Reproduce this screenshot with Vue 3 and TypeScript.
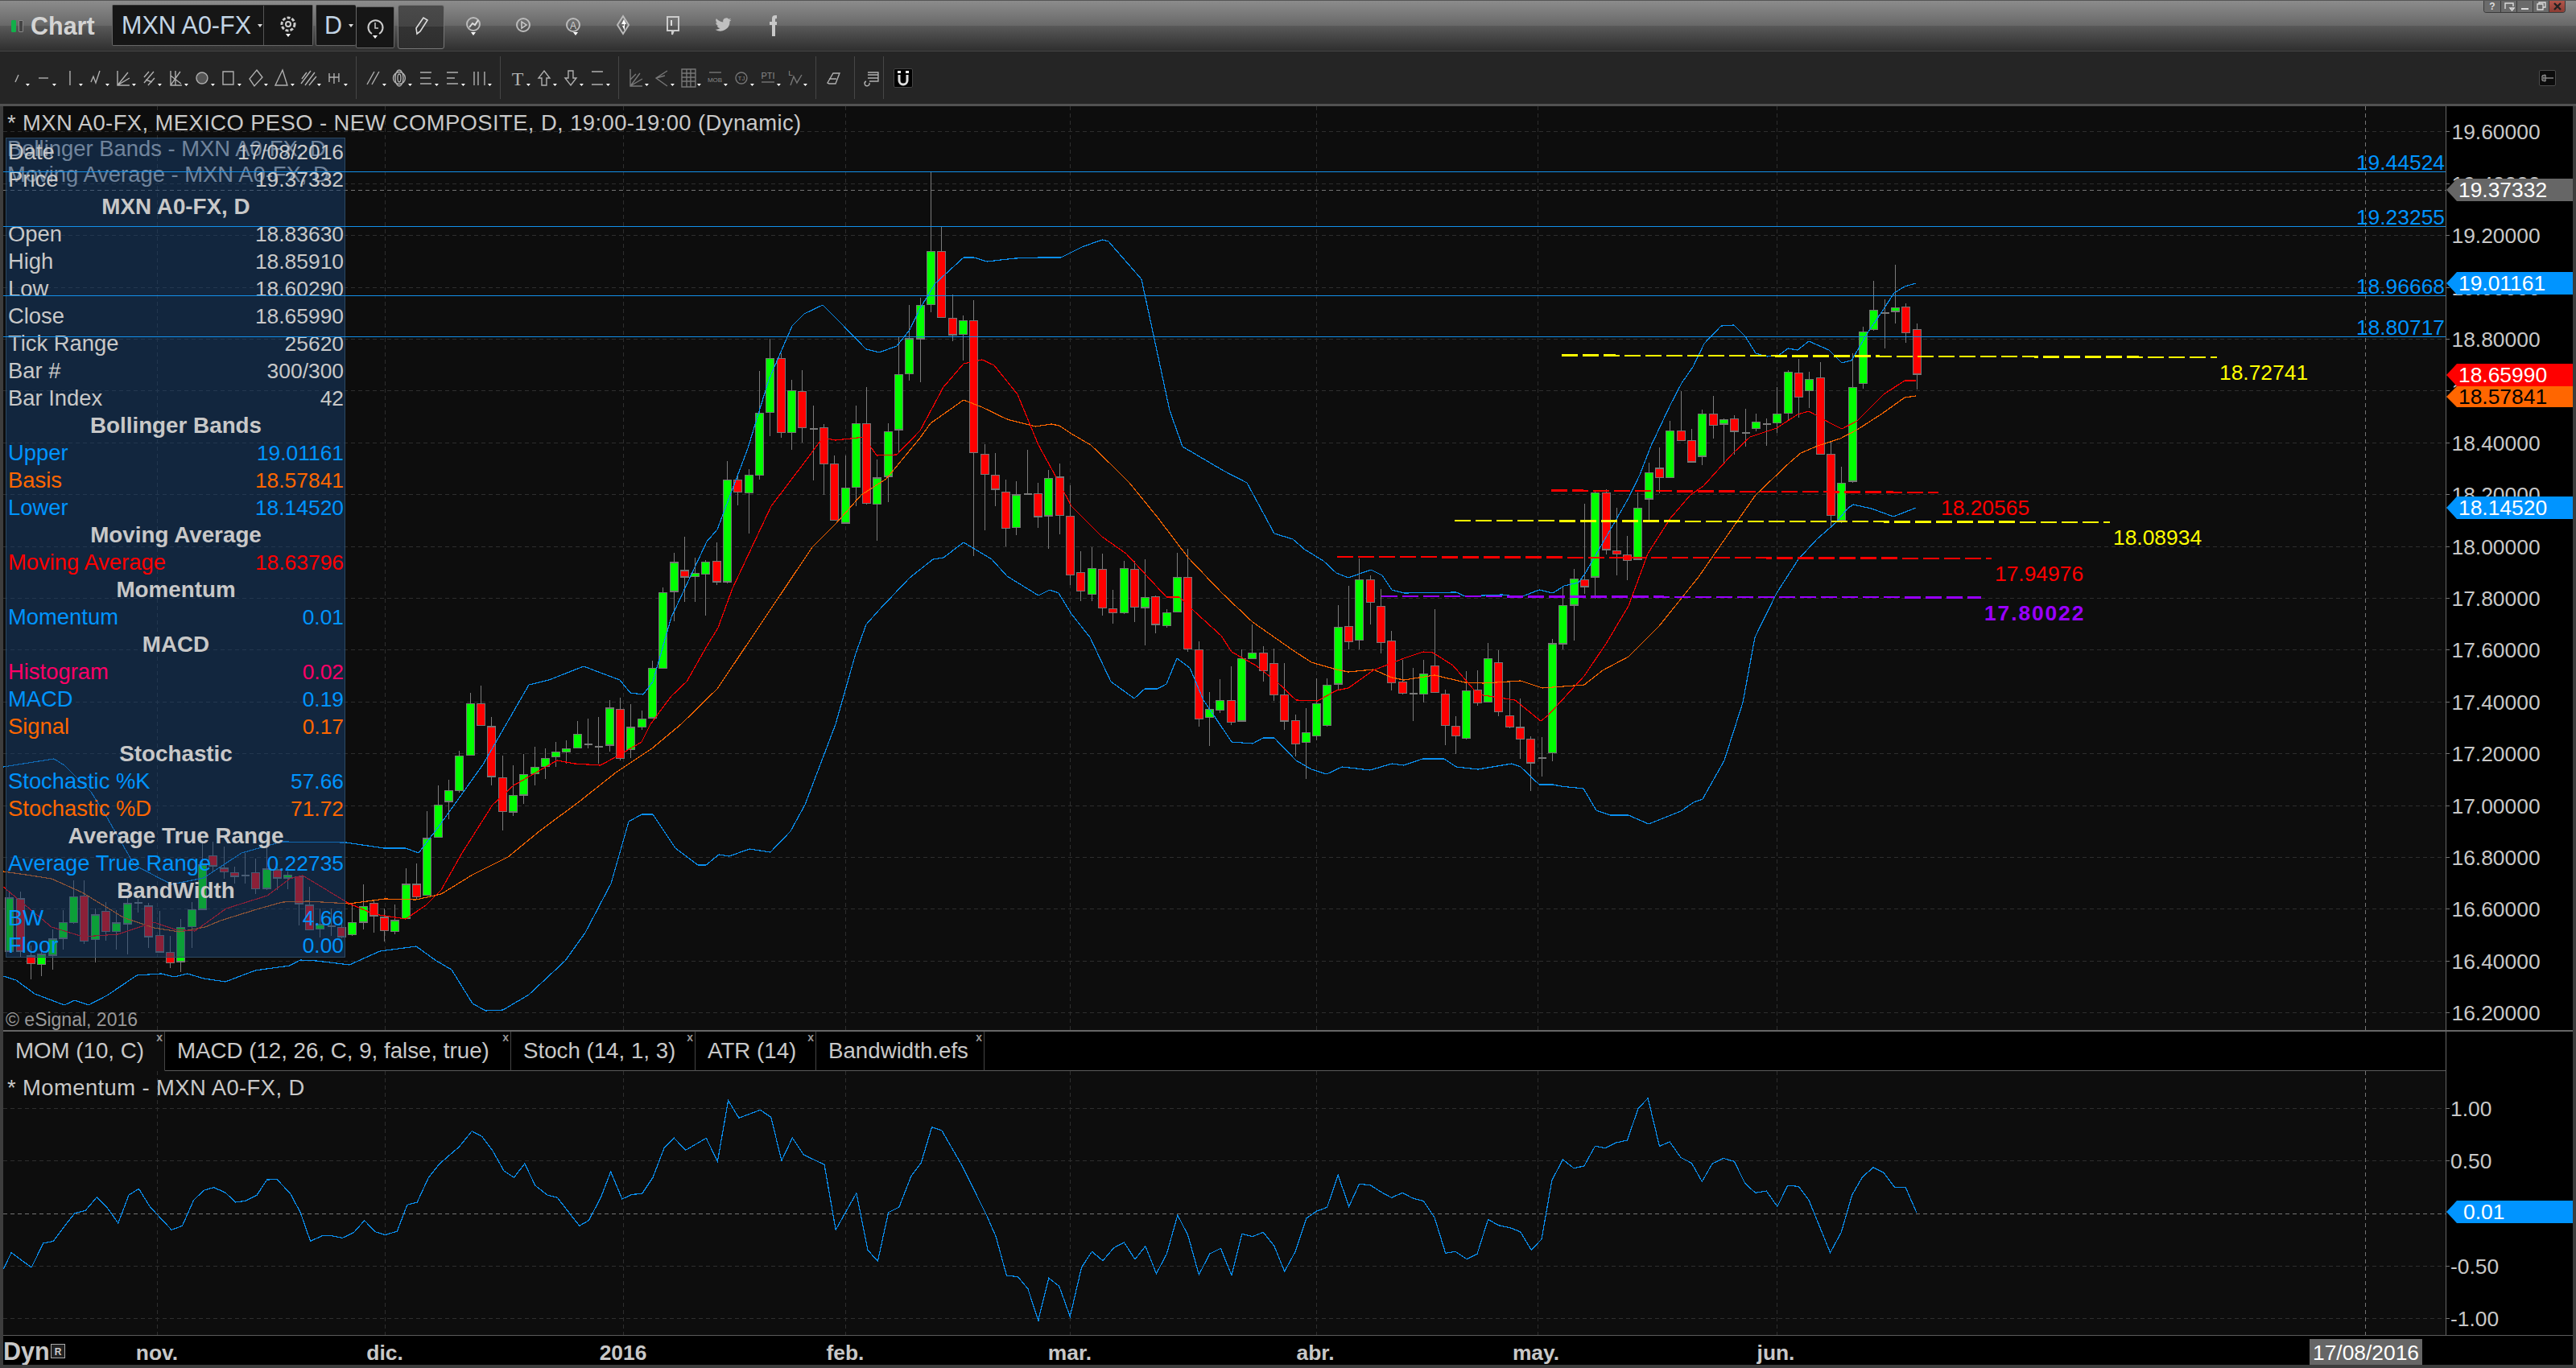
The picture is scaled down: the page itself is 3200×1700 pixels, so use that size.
<script setup lang="ts">
type Row = [number, number, number, number, string]
type Pt = [number, number]

// candle rows are read off the chart as top, bottom, wick top, wick bottom, colour
function readRows(y0: number, sy: number, rows: Row[]) {
  return rows.map(([t, b, wt, wb, c]) => ({
    top: y0 + t / sy,
    bot: y0 + b / sy,
    wickTop: y0 + wt / sy,
    wickBot: y0 + wb / sy,
    c,
  }))
}

const rawCandles = [
  ...readRows(300, 2.24, [
    [245, 370, 228, 412, 'r'], [182, 254, 172, 283, 'r'], [185, 195, 65, 228, 'g'], [199, 199, 162, 298, 'd'],
    [191, 245, 110, 248, 'g'], [252, 395, 238, 410, 'g'], [406, 668, 312, 673, 'g'], [673, 776, 628, 785, 'g'],
    [592, 763, 558, 792, 'r'], [380, 592, 337, 592, 'r'], [384, 415, 362, 464, 'g'], [366, 433, 326, 490, 'r'],
    [364, 478, 358, 500, 'g'], [480, 505, 405, 532, 'g'], [508, 508, 493, 570, 'd'], [503, 521, 480, 528, 'g'],
    [533, 533, 467, 572, 'd'], [494, 529, 484, 593, 'r'], [496, 509, 492, 618, 'g'], [480, 512, 430, 548, 'r'],
    [480, 598, 468, 622, 'g'], [554, 614, 522, 614, 'r'], [527, 554, 417, 527, 'r'], [527, 657, 500, 657, 'g'],
    [632, 657, 573, 700, 'r'], [644, 717, 617, 780, 'g'], [742, 885, 698, 885, 'g'], [872, 888, 820, 944, 'r'],
    [861, 870, 742, 930, 'r'], [700, 858, 690, 872, 'r'], [700, 934, 692, 994, 'g'], [942, 961, 730, 982, 'r'],
    [940, 1013, 912, 1110, 'g'], [1014, 1120, 962, 1136, 'g'], [1120, 1423, 1107, 1448, 'g'], [1437, 1437, 1380, 1490, 'd'],
    [1385, 1452, 1378, 1530, 'r'],
  ]),
  ...readRows(600, 3, [
    [912, 955, 805, 1030, 'r'], [868, 910, 738, 915, 'r'], [670, 853, 625, 870, 'r'], [655, 818, 597, 820, 'g'],
    [772, 820, 700, 830, 'r'], [775, 952, 702, 958, 'g'], [907, 943, 870, 1010, 'r'], [787, 905, 770, 978, 'r'],
    [682, 782, 470, 782, 'r'], [712, 788, 660, 820, 'g'], [786, 786, 690, 888, 'd'], [742, 785, 660, 790, 'r'],
    [590, 745, 552, 775, 'r'], [460, 595, 395, 635, 'r'], [361, 445, 345, 528, 'r'], [361, 586, 282, 620, 'g'],
    [536, 593, 385, 620, 'r'], [538, 750, 455, 770, 'g'], [754, 905, 730, 910, 'g'], [823, 943, 730, 960, 'g'],
    [931, 967, 840, 1103, 'g'], [886, 973, 865, 1020, 'r'], [790, 888, 672, 920, 'r'], [674, 790, 618, 812, 'r'],
    [634, 700, 610, 740, 'r'], [634, 655, 528, 655, 'g'], [655, 888, 620, 890, 'g'], [812, 892, 685, 902, 'r'],
    [812, 847, 732, 858, 'g'], [845, 874, 780, 980, 'g'], [622, 880, 592, 908, 'r'], [352, 620, 245, 630, 'r'],
    [352, 482, 260, 483, 'g'], [484, 532, 470, 540, 'g'], [424, 528, 420, 562, 'r'], [428, 465, 285, 605, 'g'],
    [322, 463, 290, 520, 'r'], [320, 484, 290, 490, 'g'], [470, 484, 400, 525, 'r'], [322, 466, 265, 495, 'r'],
    [320, 415, 240, 440, 'g'], [334, 403, 255, 440, 'r'], [124, 343, 10, 380, 'r'],
  ]),
  ...readRows(200, 2.24, [
    [880, 987, 842, 1040, 'r'], [884, 988, 860, 1080, 'g'], [926, 990, 895, 1022, 'r'], [927, 927, 805, 930, 'd'],
    [930, 1020, 892, 1042, 'g'], [922, 1022, 888, 1072, 'r'], [875, 914, 812, 960, 'r'], [817, 872, 788, 1028, 'r'],
    [445, 812, 388, 1100, 'r'], [445, 483, 430, 555, 'g'], [438, 484, 372, 502, 'r'], [252, 436, 183, 436, 'r'],
    [252, 400, 30, 422, 'g'], [402, 495, 380, 615, 'g'], [495, 592, 400, 612, 'g'], [595, 748, 490, 810, 'g'],
    [754, 878, 730, 950, 'g'], [882, 955, 830, 1058, 'g'], [731, 953, 630, 957, 'r'], [731, 908, 680, 960, 'g'],
    [910, 1008, 820, 1010, 'g'], [843, 1000, 820, 1002, 'r'], [742, 843, 732, 930, 'r'], [746, 746, 680, 890, 'd'],
    [642, 743, 582, 785, 'r'], [640, 756, 610, 805, 'g'], [550, 756, 535, 770, 'r'], [550, 700, 495, 765, 'g'],
    [702, 875, 585, 888, 'g'], [875, 924, 858, 1038, 'g'], [888, 922, 875, 958, 'r'], [888, 1172, 836, 1175, 'g'],
    [1114, 1172, 1062, 1180, 'r'], [1117, 1150, 1110, 1265, 'g'], [1148, 1157, 1105, 1228, 'g'], [1140, 1158, 1045, 1228, 'r'],
    [1118, 1198, 1090, 1282, 'g'], [1202, 1412, 1188, 1412, 'g'], [1412, 1550, 1390, 1552, 'g'],
  ]),
  ...readRows(700, 2.613, [
    [505, 532, 478, 540, 'g'], [533, 605, 458, 632, 'g'], [474, 634, 437, 640, 'r'], [470, 590, 445, 612, 'g'],
    [595, 595, 500, 650, 'd'], [587, 587, 505, 600, 'd'], [555, 600, 512, 600, 'g'], [602, 613, 575, 650, 'g'],
    [613, 628, 580, 660, 'g'], [633, 660, 600, 700, 'g'], [662, 683, 595, 720, 'g'], [686, 752, 620, 782, 'g'],
    [754, 808, 655, 820, 'g'], [696, 806, 625, 868, 'r'], [530, 692, 500, 720, 'r'], [456, 526, 396, 528, 'r'],
    [456, 623, 420, 625, 'g'], [626, 738, 610, 745, 'g'], [738, 773, 702, 830, 'g'], [785, 890, 720, 890, 'g'],
    [893, 1078, 805, 1078, 'g'], [1042, 1083, 975, 1090, 'r'], [1042, 1153, 990, 1155, 'g'], [1160, 1195, 1108, 1205, 'g'],
    [1150, 1193, 1120, 1228, 'r'], [1104, 1145, 1095, 1200, 'r'], [1114, 1165, 1042, 1190, 'g'], [1167, 1206, 1105, 1210, 'g'],
    [1183, 1212, 1130, 1218, 'r'], [1178, 1178, 1120, 1210, 'd'], [1173, 1187, 1120, 1215, 'g'], [1110, 1190, 1050, 1190, 'r'],
    [1018, 1105, 1015, 1175, 'r'], [1012, 1022, 1000, 1058, 'g'], [995, 1022, 985, 1060, 'r'], [993, 1056, 920, 1060, 'g'],
    [1005, 1057, 960, 1075, 'r'], [1013, 1013, 940, 1040, 'd'], [1005, 1017, 985, 1040, 'r'], [990, 1002, 920, 1025, 'r'],
    [950, 983, 905, 1000, 'r'], [980, 1123, 905, 1125, 'g'], [1125, 1180, 1100, 1250, 'g'], [1183, 1293, 1155, 1327, 'g'],
    [1263, 1297, 1210, 1315, 'r'], [1208, 1262, 1130, 1262, 'r'], [1113, 1212, 1103, 1250, 'r'], [1103, 1103, 1090, 1135, 'd'],
    [1105, 1170, 1085, 1270, 'g'], [1168, 1195, 1125, 1255, 'g'], [1130, 1195, 1100, 1225, 'r'], [1142, 1222, 1120, 1295, 'g'],
    [1080, 1227, 1030, 1235, 'r'], [1083, 1167, 1030, 1170, 'g'], [1167, 1218, 1125, 1255, 'g'], [1220, 1273, 1190, 1320, 'g'],
    [1270, 1302, 1245, 1340, 'g'], [1275, 1300, 1240, 1350, 'r'], [1090, 1260, 1065, 1280, 'r'], [1087, 1260, 1065, 1262, 'g'],
  ]),
]

const BAR_STEP = 13.31
const candles = rawCandles.map((c, k) => ({ ...c, x: Math.round(2380.5 - BAR_STEP * k) + 0.5 }))

const upperBand: Pt[] = [
  [4, 953], [67, 943], [80, 951], [113, 984], [133, 1016], [167, 1075], [213, 1099], [253, 1091], [300, 1060], [350, 1046],
  [430, 1047], [477, 1054], [504, 1054], [520, 1060], [548, 1023], [600, 950], [657, 851], [682, 845], [725, 828], [746, 836],
  [770, 845], [783, 861], [799, 863], [811, 847], [834, 767], [878, 673], [891, 658], [929, 557], [955, 472], [984, 405],
  [999, 390], [1022, 379], [1044, 401], [1076, 434], [1092, 438], [1114, 430], [1130, 410], [1143, 383], [1162, 352], [1197, 320],
  [1210, 320], [1226, 325], [1261, 321], [1293, 320], [1318, 320], [1344, 307], [1369, 298], [1377, 300], [1418, 347], [1453, 510],
  [1469, 555], [1520, 585], [1549, 600], [1583, 663], [1606, 670], [1621, 683], [1644, 697], [1660, 712], [1675, 718], [1703, 708],
  [1717, 715], [1729, 733], [1744, 737], [1809, 736], [1820, 741], [1866, 739], [1889, 742], [1912, 733], [1929, 737], [1943, 728],
  [1961, 724], [1970, 711], [2023, 619], [2037, 590], [2051, 554], [2075, 503], [2089, 476], [2103, 456], [2117, 427], [2138, 405],
  [2154, 404], [2168, 418], [2181, 439], [2195, 443], [2209, 442], [2221, 433], [2233, 435], [2247, 424], [2272, 435], [2288, 451],
  [2300, 448], [2321, 412], [2340, 384], [2353, 364], [2366, 356], [2380, 352],
]

const lowerBand: Pt[] = [
  [4, 1213], [20, 1218], [43, 1235], [80, 1249], [93, 1243], [110, 1249], [133, 1237], [170, 1212], [200, 1210], [217, 1214],
  [233, 1210], [253, 1216], [280, 1220], [317, 1206], [360, 1200], [373, 1193], [393, 1194], [434, 1199], [472, 1182], [517, 1176],
  [542, 1194], [561, 1205], [587, 1247], [603, 1256], [625, 1255], [657, 1236], [702, 1194], [727, 1159], [759, 1098], [781, 1021],
  [797, 1012], [811, 1012], [839, 1054], [867, 1075], [877, 1075], [893, 1062], [906, 1064], [931, 1055], [957, 1059], [982, 1033],
  [1000, 1000], [1038, 900], [1063, 812], [1076, 776], [1092, 758], [1130, 718], [1159, 695], [1172, 693], [1197, 674], [1232, 695],
  [1251, 716], [1290, 740], [1304, 733], [1315, 737], [1331, 763], [1354, 792], [1380, 847], [1409, 868], [1422, 856], [1438, 856],
  [1449, 850], [1462, 818], [1478, 830], [1495, 870], [1530, 922], [1556, 924], [1569, 917], [1583, 917], [1610, 945], [1629, 956],
  [1648, 962], [1667, 953], [1702, 957], [1729, 949], [1744, 951], [1767, 943], [1794, 943], [1809, 953], [1836, 956], [1878, 949],
  [1889, 953], [1912, 975], [1929, 975], [1939, 977], [1967, 980], [1983, 1007], [2000, 1013], [2023, 1013], [2048, 1024], [2088, 1008],
  [2104, 997], [2115, 993], [2142, 945], [2165, 873], [2180, 792], [2207, 737], [2234, 695], [2257, 670], [2280, 650], [2295, 632],
  [2302, 627], [2325, 632], [2352, 642], [2380, 631],
]

const redMa: Pt[] = [
  [4, 1102], [64, 1152], [103, 1164], [147, 1161], [191, 1146], [217, 1155], [242, 1157], [281, 1129], [332, 1113], [360, 1092],
  [376, 1088], [434, 1123], [465, 1136], [504, 1142], [529, 1125], [548, 1106], [574, 1060], [612, 1000], [638, 976], [692, 945],
  [714, 949], [746, 951], [775, 935], [797, 922], [808, 900], [834, 865], [853, 847], [878, 803], [892, 780], [910, 731],
  [958, 629], [999, 575], [1022, 544], [1038, 547], [1057, 545], [1073, 543], [1089, 566], [1114, 565], [1143, 535], [1172, 481],
  [1197, 452], [1220, 447], [1235, 454], [1264, 490], [1290, 553], [1312, 593], [1331, 629], [1369, 667], [1399, 688], [1449, 742],
  [1465, 742], [1484, 760], [1517, 790], [1530, 810], [1560, 827], [1587, 848], [1610, 870], [1637, 871], [1660, 858], [1675, 855],
  [1706, 833], [1744, 818], [1768, 810], [1780, 811], [1805, 827], [1836, 863], [1882, 870], [1914, 896], [1923, 889], [1968, 840],
  [1995, 800], [2023, 753], [2047, 688], [2075, 644], [2100, 615], [2116, 604], [2153, 563], [2174, 543], [2207, 532], [2233, 515],
  [2247, 511], [2272, 525], [2288, 533], [2307, 523], [2340, 490], [2366, 473], [2380, 473],
]

const orangeBasis: Pt[] = [
  [4, 1083], [32, 1087], [64, 1092], [102, 1109], [153, 1140], [191, 1153], [223, 1158], [255, 1152], [274, 1144], [319, 1130],
  [351, 1121], [383, 1120], [434, 1123], [478, 1117], [517, 1118], [548, 1111], [587, 1087], [631, 1065], [670, 1033], [721, 995],
  [765, 960], [810, 930], [846, 900], [891, 856], [942, 780], [1009, 680], [1038, 651], [1070, 615], [1101, 595], [1143, 544],
  [1156, 526], [1197, 497], [1220, 506], [1251, 521], [1286, 530], [1306, 527], [1316, 529], [1331, 539], [1355, 553], [1382, 579],
  [1403, 600], [1438, 643], [1476, 693], [1518, 737], [1556, 773], [1606, 808], [1629, 823], [1660, 832], [1675, 835], [1706, 832],
  [1729, 842], [1744, 845], [1782, 839], [1820, 848], [1843, 849], [1889, 846], [1916, 855], [1968, 851], [1991, 833], [2023, 816],
  [2061, 778], [2110, 717], [2153, 655], [2181, 615], [2223, 575], [2237, 563], [2258, 554], [2286, 545], [2307, 534], [2338, 514],
  [2366, 494], [2380, 492],
]

const momentumPts: Pt[] = [
  ...([
    [5, 1012], [17, 950], [47, 1005], [65, 915], [80, 907], [97, 850], [112, 803], [128, 793], [145, 743], [160, 780], [177, 840],
    [193, 735], [208, 712], [225, 780], [257, 865], [273, 850], [290, 755], [305, 718], [320, 707], [337, 725], [353, 762], [368, 757],
    [385, 735], [400, 678], [415, 677], [435, 730], [450, 800], [465, 907], [483, 887], [497, 887], [513, 895], [530, 875], [546, 830],
    [562, 872], [577, 884], [595, 870], [610, 772], [625, 762], [642, 670], [658, 620], [688, 555], [707, 497], [722, 517], [738, 570],
    [755, 645], [770, 670], [786, 618], [802, 700], [820, 735], [835, 745], [868, 850], [882, 830], [900, 745], [915, 648], [932, 750],
    [947, 733], [962, 730], [978, 670], [995, 560], [1010, 523], [1027, 568], [1058, 523], [1075, 610], [1091, 382], [1107, 448], [1139, 418],
    [1155, 445], [1171, 607], [1187, 522], [1204, 585], [1235, 622], [1252, 865], [1283, 728], [1300, 940], [1315, 982], [1331, 800],
    [1347, 780], [1365, 665], [1380, 615], [1396, 482], [1411, 495], [1440, 620], [1478, 810], [1492, 890], [1508, 1035], [1525, 1040],
    [1540, 1085], [1556, 1207],
  ] as Pt[]).map(([x, y]): Pt => [x / 1.206, 1240 + y / 3]),
  ...([
    [0, 900], [18, 745], [36, 775], [55, 888], [75, 705], [93, 646], [112, 680], [131, 632], [149, 612], [168, 675], [186, 626],
    [205, 728], [223, 655], [242, 510], [260, 585], [279, 732], [298, 654], [317, 634], [336, 735], [354, 580], [372, 590], [391, 574],
    [410, 625], [428, 720], [447, 645], [466, 522], [484, 495], [502, 481], [521, 360], [540, 478], [558, 394], [577, 398], [596, 424],
    [614, 445], [633, 427], [651, 447], [670, 458], [689, 520], [708, 652], [725, 646], [745, 674], [763, 655], [782, 526], [800, 548],
    [820, 557], [838, 572], [857, 640], [875, 600], [893, 380], [912, 303], [931, 335], [949, 327], [968, 253], [986, 260], [1005, 240],
    [1024, 231], [1043, 113], [1060, 74], [1080, 253], [1098, 237], [1117, 295], [1136, 316], [1154, 385], [1172, 318], [1191, 298], [1210, 310],
    [1229, 392], [1247, 427], [1266, 420], [1285, 478], [1303, 400], [1322, 403], [1340, 455], [1377, 650], [1396, 575], [1415, 435], [1433, 368],
    [1452, 332], [1470, 352], [1489, 406], [1508, 406], [1527, 500],
  ] as Pt[]).map(([x, y]): Pt => [1290 + x / 1.4, 1340 + y / 3]),
]

const toPoints = (pts: Pt[]) => pts.map(([x, y]) => `${x},${y}`).join(' ')

const bands = [
  { pts: toPoints(upperBand), color: '#0a8ff0' },
  { pts: toPoints(lowerBand), color: '#0a8ff0' },
  { pts: toPoints(orangeBasis), color: '#ff6600' },
  { pts: toPoints(redMa), color: '#ff0000' },
]
const momentumLine = toPoints(momentumPts)

const priceY = (v: number) => 163.3 + (19.6 - v) * 322
const priceTicks = Array.from({ length: 18 }, (_, i) => {
  const v = 19.6 - i * 0.2
  return { y: Math.round(priceY(v)) + 0.5, text: v.toFixed(5) }
})
const momTicks = [
  { y: 1377.5, text: '1.00' },
  { y: 1442.5, text: '0.50' },
  { y: 1573.5, text: '-0.50' },
  { y: 1638.5, text: '-1.00' },
]
const monthGrid = [195.5, 478.5, 774.5, 1050.5, 1329.5, 1635.5, 1910.5, 2207.5]
const months = [
  { x: 195, t: 'nov.' }, { x: 478, t: 'dic.' }, { x: 774, t: '2016' }, { x: 1050, t: 'feb.' },
  { x: 1329, t: 'mar.' }, { x: 1634, t: 'abr.' }, { x: 1908, t: 'may.' }, { x: 2206, t: 'jun.' },
]

const fibLines = [
  { y: 213.5, text: '19.44524' },
  { y: 281.5, text: '19.23255' },
  { y: 367.5, text: '18.96668' },
  { y: 418.5, text: '18.80717' },
]

const trendLines = [
  { x1: 1940, y1: 441.5, x2: 2754, y2: 444, color: '#ffff00', text: '18.72741', tx: 2757, ty: 472, bold: false },
  { x1: 1807, y1: 647, x2: 2621, y2: 649, color: '#ffff00', text: '18.08934', tx: 2625, ty: 677, bold: false },
  { x1: 1927, y1: 609.5, x2: 2408, y2: 612, color: '#ff0000', text: '18.20565', tx: 2411, ty: 640, bold: false },
  { x1: 1661, y1: 692, x2: 2474, y2: 694, color: '#ff0000', text: '17.94976', tx: 2478, ty: 722, bold: false },
  { x1: 1716, y1: 741, x2: 2461, y2: 742.5, color: '#9900ff', text: '17.80022', tx: 2465, ty: 771, bold: true },
]

const axisTags = [
  { top: 222, bot: 250, fill: '#666666', color: '#ffffff', text: '19.37332' },
  { top: 338, bot: 366, fill: '#0094ff', color: '#ffffff', text: '19.01161' },
  { top: 452, bot: 480, fill: '#ff0000', color: '#ffffff', text: '18.65990' },
  { top: 480, bot: 506, fill: '#ff6600', color: '#000000', text: '18.57841' },
  { top: 617, bot: 645, fill: '#0094ff', color: '#ffffff', text: '18.14520' },
]
const tagShape = (top: number, bot: number) =>
  `3039,${(top + bot) / 2} 3052,${top} 3196,${top} 3196,${bot} 3052,${bot}`

const BLUE = '#0094ff'
const ORANGE = '#ff6600'
const panelRows = [
  { label: 'Date', value: '17/08/2016' },
  { label: 'Price', value: '19.37332' },
  { head: 'MXN A0-FX, D' },
  { label: 'Open', value: '18.83630' },
  { label: 'High', value: '18.85910' },
  { label: 'Low', value: '18.60290' },
  { label: 'Close', value: '18.65990' },
  { label: 'Tick Range', value: '25620' },
  { label: 'Bar #', value: '300/300' },
  { label: 'Bar Index', value: '42' },
  { head: 'Bollinger Bands' },
  { label: 'Upper', value: '19.01161', color: BLUE },
  { label: 'Basis', value: '18.57841', color: ORANGE },
  { label: 'Lower', value: '18.14520', color: BLUE },
  { head: 'Moving Average' },
  { label: 'Moving Average', value: '18.63796', color: '#ff0000' },
  { head: 'Momentum' },
  { label: 'Momentum', value: '0.01', color: BLUE },
  { head: 'MACD' },
  { label: 'Histogram', value: '0.02', color: '#ff0066' },
  { label: 'MACD', value: '0.19', color: BLUE },
  { label: 'Signal', value: '0.17', color: ORANGE },
  { head: 'Stochastic' },
  { label: 'Stochastic %K', value: '57.66', color: BLUE },
  { label: 'Stochastic %D', value: '71.72', color: ORANGE },
  { head: 'Average True Range' },
  { label: 'Average True Range', value: '0.22735', color: BLUE },
  { head: 'BandWidth' },
  { label: 'BW', value: '4.66', color: BLUE },
  { label: 'Floor', value: '0.00', color: BLUE },
]

const tabs = [
  { text: 'MOM (10, C)', width: 201, active: true },
  { text: 'MACD (12, 26, C, 9, false, true)', width: 430, active: false },
  { text: 'Stoch (14, 1, 3)', width: 229, active: false },
  { text: 'ATR (14)', width: 150, active: false },
  { text: 'Bandwidth.efs', width: 209, active: false },
]

const ring = (cx: number, cy: number, r: number) =>
  `M${cx - r} ${cy}a${r} ${r} 0 1 0 ${2 * r} 0a${r} ${r} 0 1 0 ${-2 * r} 0`

type Tool = { d?: string; fill?: string; label?: string; lx?: number; ly?: number; ls?: number; serif?: boolean }
type ToolGroup = { dim?: boolean; tools: Tool[] }

const toolGroups: ToolGroup[] = [
  {
    tools: [
      { d: 'M12 25L16 16' },
      { d: 'M8 20H20' },
      { d: 'M14 11V29' },
      { d: 'M7 25L10 18L13 26L18 11' },
      { d: 'M7 11V29H22M7 29L20 13M7 29L22 20' },
      { d: 'M8 26L20 12M8 19L14 12M13 29L21 20M10 22L18 25' },
      { d: 'M8 11V29H22M8 29L20 12M8 17L21 27M14 11L14 29' },
      { d: ring(14, 20, 7), fill: '#555' },
      { d: 'M7 12H20V28H7Z' },
      { d: 'M16 10L23 19L13 30L7 21Z' },
      { d: 'M15 10L21 29H6Z' },
      { d: 'M5 27L17 11M10 29L22 13M15 29L24 18M6 21L12 13' },
      { d: 'M7 14V25M13 14V27M19 14V25M7 19H19' },
    ],
  },
  {
    tools: [
      { d: 'M6 28L15 12M12 28L21 12' },
      { d: `${ring(14, 20, 7.5)}M14 10a5 10 0 0 1 0 20a5 10 0 0 1 0 -20M14 15a2 5 0 0 1 0 10a2 5 0 0 1 0 -10` },
      { d: 'M7 13H21M7 20H20M7 27H21' },
      { d: 'M7 13H21M7 20H17M7 27H21' },
      { d: 'M8 12V29M13 12V29M21 12V29' },
    ],
  },
  {
    tools: [
      { label: 'T', lx: 14, ly: 29, ls: 24, serif: true },
      { d: 'M14 11L21 20H17V29H11V20H7Z' },
      { d: 'M14 29L21 20H17V11H11V20H7Z' },
      { d: 'M7 12H21M7 28H21', fill: '#666' },
    ],
  },
  {
    dim: true,
    tools: [
      { d: 'M7 9V30H22M7 30L19 14M7 30L22 21M7 22L14 15' },
      { d: 'M21 11L7 20L21 30M7 20L18 17' },
      { d: 'M6 9H23V31H6ZM6 14H23M6 19H23M6 24H23M12 9V31M17 9V31' },
      { d: 'M7 13H22', label: 'MOB', lx: 14, ly: 25, ls: 8 },
      { d: ring(14, 20, 7), fill: '#222', label: 'TJ', lx: 14, ly: 23, ls: 8 },
      { d: 'M6 25H22', label: 'PTI', lx: 14, ly: 21, ls: 11 },
      { d: 'M9 29L13 18L17 26L23 16', label: 'L', lx: 9, ly: 17, ls: 10 },
    ],
  },
  { tools: [{ d: 'M7 26L14 14H22L17 27H9ZM9 21H18' }] },
  { tools: [{ d: 'M9 13H22V24H11M9 16H22M9 20H22M7 24a3 3 0 1 0 4 2' }] },
]
</script>

<template>
  <div class="window">
    <header class="titlebar">
      <span class="led led-on"></span><span class="led"></span>
      <span class="app-name">Chart</span>
      <div class="symbol-box">
        <span class="symbol-text">MXN A0-FX</span>
        <svg class="caret" width="6" height="4"><path d="M0 0H6L3 4Z" fill="#ddd" /></svg>
        <div class="symbol-gear">
          <svg width="26" height="34" viewBox="0 0 26 34">
            <circle cx="13" cy="15" r="8" fill="none" stroke="#ccc" stroke-width="3" stroke-dasharray="4 2" />
            <circle cx="13" cy="15" r="3" fill="none" stroke="#ccc" stroke-width="2" />
            <path d="M10 27H16L13 31Z" fill="#fff" />
          </svg>
        </div>
      </div>
      <div class="interval-box">
        <span class="symbol-text">D</span>
        <svg class="caret" width="6" height="4"><path d="M0 0H6L3 4Z" fill="#ddd" /></svg>
      </div>
      <div class="clock-box">
        <svg width="26" height="36" viewBox="0 0 26 36">
          <path d="M9 26a9 9 0 1 1 9 0" fill="none" stroke="#ccc" stroke-width="2" />
          <path d="M13 12V19H17" fill="none" stroke="#ccc" stroke-width="1.5" />
          <path d="M10 28H16L13 32Z" fill="#fff" />
        </svg>
      </div>
      <div class="pen-box">
        <svg width="26" height="36" viewBox="0 0 26 36">
          <path d="M8 27L7 20L16 7L21 10L12 24Z" fill="none" stroke="#ddd" stroke-width="1.6" />
        </svg>
      </div>
      <div class="top-icons">
        <svg viewBox="0 0 62 40">
          <path :d="ring(31, 18, 8)" fill="none" stroke="#bbb" stroke-width="2" />
          <path d="M26 22L30 17L33 19L37 13" fill="none" stroke="#ddd" stroke-width="2" />
          <path d="M28 28H34L31 32Z" fill="#fff" />
        </svg>
        <svg viewBox="0 0 62 40">
          <path :d="ring(31, 19, 8)" fill="none" stroke="#bbb" stroke-width="2" />
          <path d="M29 15L35 19L29 23Z" fill="none" stroke="#ccc" stroke-width="1.5" />
        </svg>
        <svg viewBox="0 0 62 40">
          <path :d="ring(31, 19, 8)" fill="none" stroke="#bbb" stroke-width="2" />
          <text x="31" y="24" class="icon-text" font-size="12">A</text>
          <path d="M31 28H37L34 32Z" fill="#fff" />
        </svg>
        <svg viewBox="0 0 62 40">
          <path d="M31 8L38 19L31 30L24 19Z" fill="none" stroke="#bbb" stroke-width="2" />
          <path d="M29 18L32 12L35 18H33V26L30 20H32V18Z" fill="#fff" />
        </svg>
        <svg viewBox="0 0 62 40">
          <path d="M24 9H38V26H32L30 31V26H24Z" fill="none" stroke="#ccc" stroke-width="2" />
          <path d="M29 13V20" stroke="#ddd" stroke-width="2" />
        </svg>
        <svg viewBox="0 0 62 40">
          <g transform="translate(19.5 6.5) scale(1)">
            <path fill="#c0c0c0" d="M22 5.9c-.7.3-1.5.5-2.4.6.9-.5 1.5-1.3 1.8-2.3-.8.5-1.7.8-2.6 1a4.1 4.1 0 0 0-7 3.7A11.7 11.7 0 0 1 3.4 4.6a4.1 4.1 0 0 0 1.3 5.5c-.7 0-1.3-.2-1.9-.5 0 2 1.4 3.7 3.3 4.1-.6.2-1.2.2-1.9.1.5 1.6 2 2.8 3.9 2.8A8.3 8.3 0 0 1 2 18.3 11.7 11.7 0 0 0 20 8c.8-.6 1.5-1.3 2-2.1z" />
          </g>
        </svg>
        <svg viewBox="0 0 62 40">
          <path d="M30 33V19H27V15H30V11Q30 7 34 7H36V11H35Q34 11 34 12V15H36V19H34V33Z" fill="#c8c8c8" />
        </svg>
      </div>
      <div class="win-buttons">
        <span class="win-btn">?</span>
        <span class="win-btn">
          <svg width="14" height="12"><path d="M2 9V2H12V6M8 8H13L10.5 11Z" fill="none" stroke="#ddd" stroke-width="1.4" /></svg>
        </span>
        <span class="win-btn">
          <svg width="12" height="12"><path d="M1 9H10" stroke="#ddd" stroke-width="2" /></svg>
        </span>
        <span class="win-btn">
          <svg width="14" height="12"><path d="M4 3V1H12V7H9M2 3H9V10H2Z" fill="none" stroke="#ddd" stroke-width="1.3" /></svg>
        </span>
        <span class="win-btn win-close">
          <svg width="12" height="12"><path d="M2 2L10 10M10 2L2 10" stroke="#222" stroke-width="2.4" /></svg>
        </span>
      </div>
    </header>

    <div class="toolbar">
      <template v-for="(group, g) in toolGroups" :key="g">
        <span v-if="g > 0" class="tool-sep"></span>
        <svg
          v-for="(tool, i) in group.tools"
          :key="i"
          class="tool"
          :class="{ 'tool-dim': group.dim }"
          width="33"
          height="40"
          viewBox="0 0 33 40"
        >
          <path v-if="tool.d" :d="tool.d" :fill="tool.fill || 'none'" class="tool-stroke" />
          <text
            v-if="tool.label"
            :x="tool.lx"
            :y="tool.ly"
            :font-size="tool.ls"
            class="tool-label"
            :class="{ 'tool-serif': tool.serif }"
          >{{ tool.label }}</text>
          <path v-if="g < 4" d="M25 27H30L27.5 30Z" fill="#fff" />
        </svg>
      </template>
      <span class="tool-sep tool-sep-last"></span>
      <div class="magnet">
        <svg width="22" height="22" viewBox="0 0 22 22">
          <path d="M6 7V14a5 5 0 0 0 10 0V7" fill="none" stroke="#ddd" stroke-width="3" />
          <path d="M4 2H8V5H4ZM14 2H18V5H14Z" fill="#fff" />
        </svg>
      </div>
      <div class="pin">
        <svg width="16" height="12" viewBox="0 0 16 12">
          <path d="M1 3L5 2V10L1 9ZM5 6H15M3 4L3 8" fill="none" stroke="#bbb" stroke-width="1" />
        </svg>
      </div>
    </div>

    <div class="body">
      <div class="main-row">
        <div class="plot">
          <svg class="plot-svg" width="3034" height="1148" viewBox="4 132 3034 1148">
            <g class="grid">
              <line v-for="t in priceTicks" :key="t.text" x1="4" x2="3038" :y1="t.y" :y2="t.y" />
              <line v-for="x in monthGrid" :key="x" :x1="x" :x2="x" y1="132" y2="1280" />
            </g>
            <line class="cross" x1="4" x2="3038" y1="236.5" y2="236.5" />
            <line class="cross" x1="2938.5" x2="2938.5" y1="132" y2="1280" />

            <g v-for="(c, i) in candles" :key="i">
              <line class="wick" :x1="c.x" :x2="c.x" :y1="c.wickTop" :y2="c.wickBot" />
              <line v-if="c.c === 'd'" class="doji" :x1="c.x - 5" :x2="c.x + 5" :y1="c.top" :y2="c.top" />
              <rect
                v-else
                class="body-rect"
                :class="c.c === 'g' ? 'up' : 'down'"
                :x="c.x - 5"
                :y="c.top"
                width="10"
                :height="c.bot - c.top"
              />
            </g>

            <polyline v-for="b in bands" :key="b.color + b.pts.length" class="band" :points="b.pts" :stroke="b.color" />

            <g v-for="l in trendLines" :key="l.text">
              <line class="trend" :x1="l.x1" :y1="l.y1" :x2="l.x2" :y2="l.y2" :stroke="l.color" />
              <text class="chart-text" :class="{ bold: l.bold }" :x="l.tx" :y="l.ty" :fill="l.color">{{ l.text }}</text>
            </g>

            <text class="chart-title" x="9" y="162">* MXN A0-FX, MEXICO PESO - NEW COMPOSITE, D, 19:00-19:00 (Dynamic)</text>
            <text class="chart-title study" x="9" y="194">Bollinger Bands - MXN A0-FX, D</text>
            <text class="chart-title study" x="9" y="226">Moving Average - MXN A0-FX, D</text>
            <text class="copyright" x="7" y="1275">© eSignal, 2016</text>
          </svg>

          <div class="data-panel">
            <div v-for="(row, i) in panelRows" :key="i" class="panel-row" :class="{ 'panel-head': row.head }" :style="row.color ? { color: row.color } : undefined">
              <template v-if="row.head">{{ row.head }}</template>
              <template v-else>
                <span>{{ row.label }}</span>
                <span class="panel-value">{{ row.value }}</span>
              </template>
            </div>
          </div>

          <svg class="plot-svg over" width="3034" height="1148" viewBox="4 132 3034 1148">
            <g v-for="l in fibLines" :key="l.text">
              <line class="fib" x1="4" x2="3038" :y1="l.y" :y2="l.y" />
              <text class="chart-text" x="3037" :y="l.y - 2.5" text-anchor="end" fill="#0094ff">{{ l.text }}</text>
            </g>
          </svg>
        </div>
        <svg class="axis" width="157" height="1148" viewBox="3039 132 157 1148">
          <g v-for="t in priceTicks" :key="t.text">
            <line class="axis-tick" x1="3039" x2="3043" :y1="t.y" :y2="t.y" />
            <text class="chart-text grey" x="3045.5" :y="t.y + 9.3">{{ t.text }}</text>
          </g>
          <g v-for="tag in axisTags" :key="tag.text">
            <polygon :points="tagShape(tag.top, tag.bot)" :fill="tag.fill" />
            <text class="chart-text" x="3054" :y="(tag.top + tag.bot) / 2 + 9" :fill="tag.color">{{ tag.text }}</text>
          </g>
        </svg>
      </div>

      <div class="splitter"></div>

      <div class="lower-row">
        <div class="lower-left">
          <div class="tabs">
            <div
              v-for="t in tabs"
              :key="t.text"
              class="tab"
              :class="{ active: t.active }"
              :style="{ width: t.width + 'px' }"
            >
              {{ t.text }}<span class="tab-close">x</span>
            </div>
            <div class="tab-fill"></div>
          </div>
          <svg class="mom-svg" width="3034" height="329" viewBox="4 1331 3034 329">
            <g class="grid">
              <line v-for="t in momTicks" :key="t.text" x1="4" x2="3038" :y1="t.y" :y2="t.y" />
              <line v-for="x in monthGrid" :key="x" :x1="x" :x2="x" y1="1331" y2="1660" />
            </g>
            <line class="cross" x1="4" x2="3038" y1="1508.5" y2="1508.5" />
            <line class="cross" x1="2938.5" x2="2938.5" y1="1331" y2="1660" />
            <polyline class="band" :points="momentumLine" stroke="#0a8ff0" />
            <text class="chart-title" x="9" y="1361">* Momentum - MXN A0-FX, D</text>
          </svg>
        </div>
        <svg class="axis" width="157" height="378" viewBox="3039 1282 157 378">
          <g v-for="t in momTicks" :key="t.text">
            <line class="axis-tick" x1="3039" x2="3043" :y1="t.y" :y2="t.y" />
            <text class="chart-text grey" x="3044" :y="t.y + 9.3">{{ t.text }}</text>
          </g>
          <polygon points="3039,1506 3052,1492 3196,1492 3196,1520 3052,1520" fill="#0094ff" />
          <text class="chart-text" x="3060" y="1515" fill="#ffffff">0.01</text>
        </svg>
      </div>

      <svg class="time-axis" width="3192" height="36" viewBox="4 1660 3192 36">
        <text class="time-label dyn" x="4" y="1690">Dyn</text>
        <rect x="63.5" y="1670.5" width="17" height="17" fill="#222" stroke="#aaa" />
        <text class="tiny" x="72" y="1684">R</text>
        <text v-for="m in months" :key="m.t" class="time-label" :x="m.x" y="1690">{{ m.t }}</text>
        <rect x="2869" y="1664" width="140" height="32" fill="#666" />
        <text class="chart-text date-tag" x="2939" y="1690" text-anchor="middle" fill="#fff">17/08/2016</text>
      </svg>
    </div>
  </div>
</template>

<style scoped>
.window {
  width: 3200px;
  height: 1700px;
  display: flex;
  flex-direction: column;
  overflow: hidden;
  background: #3d3d3d;
  font-family: "Liberation Sans", Arial, sans-serif;
  color: #c8c8c8;
}

/* top bar */
.titlebar {
  height: 63px;
  flex: none;
  display: flex;
  align-items: center;
  padding: 0 13px 0 14px;
  box-sizing: border-box;
  border-top: 1px solid #555;
  background: linear-gradient(#8c8c8c 0, #686868 31px, #595959 31px, #2f2f2f 62px);
}
.led {
  width: 6px;
  height: 15px;
  margin-right: 3px;
  background: #444;
  border: 1px solid #888;
  box-sizing: border-box;
  border-radius: 1px;
}
.led-on {
  background: #12b04a;
  border-color: #12b04a;
}
.app-name {
  font-size: 30.5px;
  font-weight: 700;
  color: #d4d4d4;
  margin-left: 6px;
  width: 101px;
}
.symbol-box,
.interval-box {
  height: 51px;
  box-sizing: border-box;
  display: flex;
  align-items: center;
  background: #161616;
  border: 1px solid #666;
  border-top-color: #333;
  border-radius: 2px;
  margin-top: -1px;
}
.symbol-box {
  width: 250px;
  padding-left: 11px;
}
.interval-box {
  width: 50px;
  padding-left: 10px;
  margin-left: 3px;
  border-right: 0;
}
.symbol-text {
  font-size: 30.5px;
  color: #c2d4e4;
}
.caret {
  margin-left: 8px;
  flex: none;
}
.symbol-gear {
  margin-left: auto;
  width: 60px;
  height: 100%;
  border-left: 1px solid #555;
  display: flex;
  align-items: center;
  justify-content: center;
}
.clock-box {
  width: 48px;
  height: 52px;
  box-sizing: border-box;
  margin-top: 3px;
  background: #161616;
  border: 1px solid #666;
  border-radius: 2px;
  display: flex;
  align-items: center;
  justify-content: center;
}
.pen-box {
  width: 58px;
  height: 55px;
  box-sizing: border-box;
  margin-left: 4px;
  margin-top: 2px;
  background: linear-gradient(#4a4a4a 0, #444 50%, #333 50%, #2e2e2e 100%);
  border: 1px solid #777;
  border-radius: 3px;
  display: flex;
  align-items: center;
  justify-content: center;
}
.top-icons {
  display: flex;
  margin-left: 5px;
}
.top-icons svg {
  width: 62px;
  height: 40px;
}
.icon-text {
  fill: #ccc;
  text-anchor: middle;
  font-family: "Liberation Sans", Arial, sans-serif;
}
.win-buttons {
  margin-left: auto;
  align-self: flex-start;
  display: flex;
  border: 1px solid #3a3a3a;
  border-top: 0;
  border-radius: 0 0 4px 4px;
  overflow: hidden;
}
.win-btn {
  width: 20px;
  height: 14px;
  box-sizing: border-box;
  display: flex;
  align-items: center;
  justify-content: center;
  background: #6b6b6b;
  border-left: 1px solid #3a3a3a;
  font-size: 12px;
  font-weight: 700;
  color: #ddd;
}
.win-btn:first-child {
  border-left: 0;
}
.win-close {
  background: linear-gradient(#b2554a, #8c3c33);
}

/* drawing tools */
.toolbar {
  height: 69px;
  flex: none;
  box-sizing: border-box;
  border-top: 1px solid #444;
  border-bottom: 3px solid #515151;
  background: #252525;
  display: flex;
  align-items: center;
  padding-left: 7px;
  position: relative;
}
.tool {
  flex: none;
  width: 32.9px;
}
.tool-stroke {
  stroke: #b0b0b0;
  stroke-width: 1.4;
}
.tool-dim .tool-stroke {
  stroke: #777;
}
.tool-label {
  fill: #b0b0b0;
  text-anchor: middle;
  font-family: "Liberation Sans", Arial, sans-serif;
}
.tool-dim .tool-label {
  fill: #888;
}
.tool-serif {
  font-family: "Liberation Serif", serif;
}
.tool-sep {
  flex: none;
  width: 1px;
  height: 53px;
  margin: 0 7px;
  background: #464646;
}
.tool-sep-last {
  margin: 0 6px 0 -5px;
}
.magnet {
  width: 24px;
  height: 24px;
  margin-left: 6px;
  background: #000;
  border: 1px solid #444;
  border-radius: 2px;
  box-sizing: border-box;
  display: flex;
  align-items: center;
  justify-content: center;
}
.pin {
  margin-left: auto;
  margin-right: 25px;
  width: 19px;
  height: 18px;
  background: #0c0c0c;
  border: 1px solid #4a4a4a;
  border-radius: 2px;
  display: flex;
  align-items: center;
  justify-content: center;
}

/* chart area */
.body {
  flex: 1;
  min-height: 0;
  padding: 0 4px 4px;
  display: flex;
  flex-direction: column;
}
.main-row {
  height: 1148px;
  flex: none;
  display: flex;
}
.plot {
  position: relative;
  width: 3034px;
  height: 1148px;
  background: #0d0d0d;
  overflow: hidden;
}
.plot-svg {
  position: absolute;
  inset: 0;
}
.over {
  pointer-events: none;
}
.axis {
  flex: none;
  background: #000;
  border-left: 1px solid #666;
  box-sizing: content-box;
}
.grid line {
  stroke: #2e2e2e;
  stroke-dasharray: 5 4;
  shape-rendering: crispEdges;
}
.cross {
  stroke: #747474;
  stroke-dasharray: 5 4;
  shape-rendering: crispEdges;
}
.wick {
  stroke: #7a7a7a;
  stroke-width: 1;
  shape-rendering: crispEdges;
}
.doji {
  stroke: #7a7a7a;
  stroke-width: 2;
  shape-rendering: crispEdges;
}
.body-rect {
  stroke: #777;
  stroke-width: 1.5;
  shape-rendering: crispEdges;
}
.up {
  fill: #00ff00;
}
.down {
  fill: #ff0000;
}
.band {
  fill: none;
  stroke-width: 1.2;
  shape-rendering: crispEdges;
}
.trend {
  stroke-width: 2.4;
  stroke-dasharray: 20 6;
  shape-rendering: crispEdges;
}
.fib {
  stroke: #1390ea;
  stroke-width: 1;
  shape-rendering: crispEdges;
}
.chart-text {
  font-family: "Liberation Sans", Arial, sans-serif;
  font-size: 26.4px;
}
.chart-title {
  font-family: "Liberation Sans", Arial, sans-serif;
  font-size: 27.4px;
  letter-spacing: 0.42px;
  fill: #c8c8c8;
}
.study {
  letter-spacing: 0;
}
.bold {
  font-weight: 700;
  letter-spacing: 1.9px;
}
.grey {
  fill: #c8c8c8;
}
.copyright {
  font-family: "Liberation Sans", Arial, sans-serif;
  font-size: 23px;
  fill: #999;
}
.axis-tick {
  stroke: #777;
  shape-rendering: crispEdges;
}

/* data window */
.data-panel {
  position: absolute;
  left: 3px;
  top: 39px;
  width: 422px;
  height: 1019px;
  box-sizing: border-box;
  border: 1px solid #2d4a63;
  background: rgba(23, 63, 111, 0.5);
}
.panel-row {
  height: 34px;
  display: flex;
  justify-content: space-between;
  align-items: center;
  padding: 0 1px 0 2px;
  font-size: 27.4px;
  white-space: nowrap;
}
.panel-head {
  justify-content: center;
  font-weight: 700;
  font-size: 27.8px;
  color: #c8c8c8;
}
.panel-value {
  font-size: 26.4px;
}

/* lower pane */
.splitter {
  height: 2px;
  flex: none;
  background: #666;
}
.lower-row {
  height: 378px;
  flex: none;
  display: flex;
}
.lower-left {
  width: 3034px;
  flex: none;
  display: flex;
  flex-direction: column;
}
.tabs {
  height: 49px;
  flex: none;
  display: flex;
  background: #000;
}
.tab {
  position: relative;
  box-sizing: border-box;
  padding: 3px 0 0 15px;
  font-size: 27.7px;
  line-height: 42px;
  white-space: nowrap;
  border-right: 1px solid #444;
  border-bottom: 1px solid #5a5a5a;
}
.tab.active {
  background: #0d0d0d;
  border-bottom-color: #0d0d0d;
}
.tab-fill {
  flex: 1;
  border-bottom: 1px solid #5a5a5a;
}
.tab-close {
  position: absolute;
  top: 0;
  right: 2px;
  font-size: 14px;
  line-height: 14px;
  font-weight: 700;
  color: #999;
}
.mom-svg {
  background: #0d0d0d;
  display: block;
}
.time-axis {
  flex: none;
  background: #000;
  border-top: 1px solid #5a5a5a;
  box-sizing: content-box;
  margin-top: -1px;
}
.time-label {
  font-family: "Liberation Sans", Arial, sans-serif;
  font-size: 26.4px;
  font-weight: 700;
  fill: #c8c8c8;
  text-anchor: middle;
}
.dyn {
  font-size: 30.5px;
  text-anchor: start;
}
.tiny {
  font-family: "Liberation Sans", Arial, sans-serif;
  font-size: 12px;
  font-weight: 700;
  fill: #ccc;
  text-anchor: middle;
}
</style>

<style>
html,
body {
  background: #000;
}
</style>
